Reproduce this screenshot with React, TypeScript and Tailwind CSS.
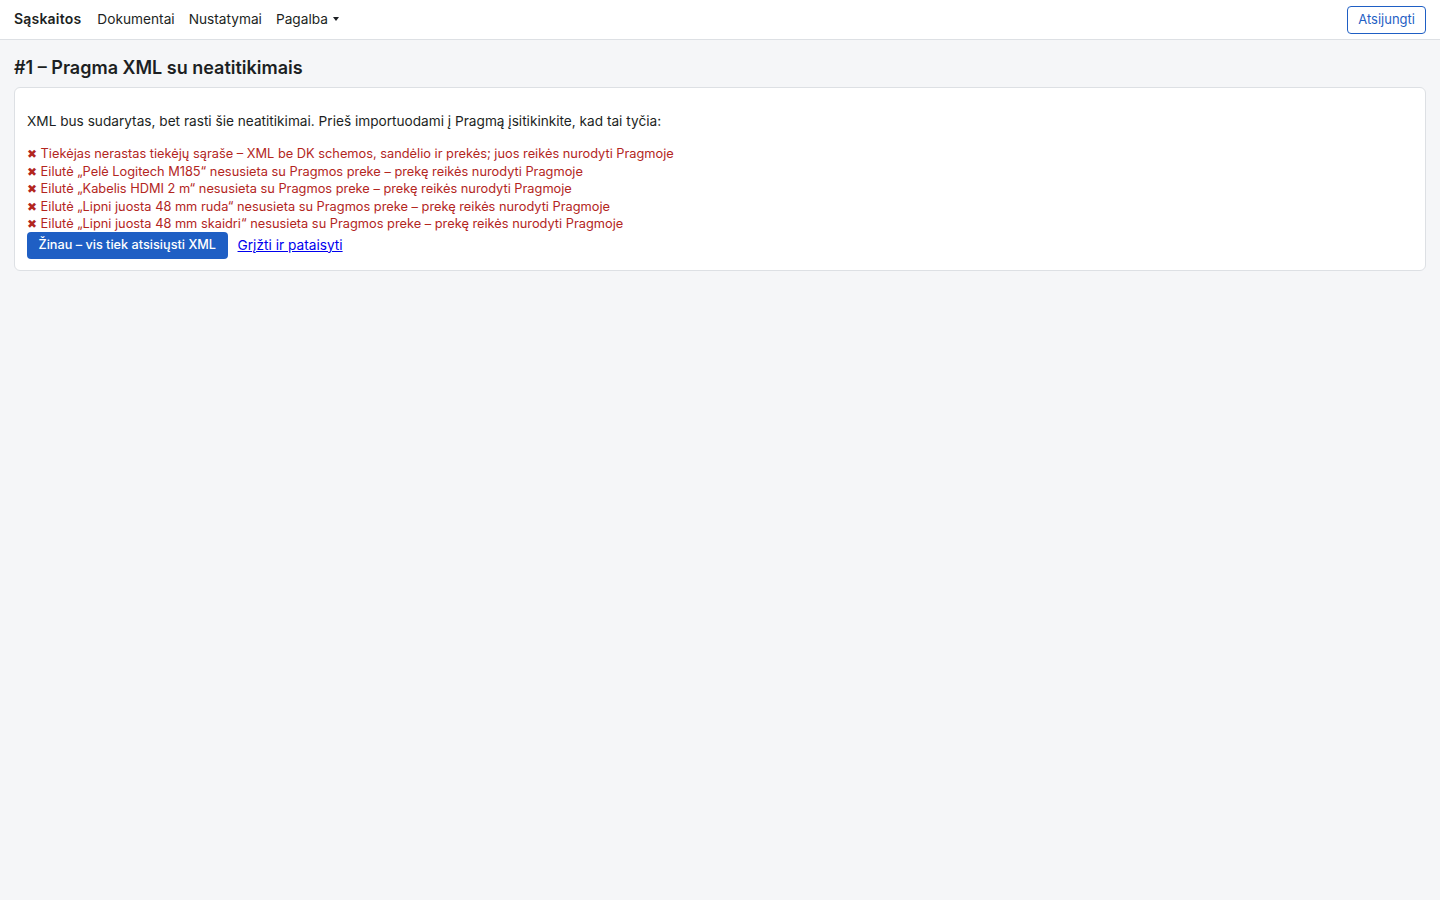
const issues = [
  "Tiekėjas nerastas tiekėjų sąraše – XML be DK schemos, sandėlio ir prekės; juos reikės nurodyti Pragmoje",
  "Eilutė „Pelė Logitech M185“ nesusieta su Pragmos preke – prekę reikės nurodyti Pragmoje",
  "Eilutė „Kabelis HDMI 2 m“ nesusieta su Pragmos preke – prekę reikės nurodyti Pragmoje",
  "Eilutė „Lipni juosta 48 mm ruda“ nesusieta su Pragmos preke – prekę reikės nurodyti Pragmoje",
  "Eilutė „Lipni juosta 48 mm skaidri“ nesusieta su Pragmos preke – prekę reikės nurodyti Pragmoje",
];

export default function App() {
  return (
    <div className="min-h-[900px] bg-[#f5f6f8] text-[#1c1f23] font-['Inter','Noto_Sans',sans-serif]">
      {/* Top nav */}
      <nav className="flex h-10 items-center justify-between border-b border-[#dde0e4] bg-white px-[14px]">
        <div className="flex items-center gap-[14px] text-[13.7px]">
          <span className="mr-[2px] text-sm font-semibold tracking-[0.2px] text-[#1c1f23]">Sąskaitos</span>
          <span>Dokumentai</span>
          <span>Nustatymai</span>
          <span className="flex items-center gap-[5px]">
            Pagalba
            <svg width="6" height="4" viewBox="0 0 6 4">
              <path d="M0 0h6L3 4z" fill="#1c1f23" />
            </svg>
          </span>
        </div>
        <button className="h-[28px] rounded-[4px] border border-[#1f5fc4] bg-white px-[10px] text-[13px] text-[#1f5fc4]">
          Atsijungti
        </button>
      </nav>

      <main className="px-[14px] pt-[16px]">
        <h1 className="mb-[7px] text-lg font-semibold leading-[24px]">#1 – Pragma XML su neatitikimais</h1>

        <div className="rounded-[6px] border border-[#dde0e4] bg-white px-[12px] pb-[11px] pt-[23px]">
          <p className="mb-[14px] text-[13.65px] leading-[20px]">
            XML bus sudarytas, bet rasti šie neatitikimai. Prieš importuodami į Pragmą įsitikinkite, kad tai tyčia:
          </p>
          <ul className="text-[12.8px] leading-[17.5px] text-[#b3261e]">
            {issues.map((t) => (
              <li key={t}>
                <span className="text-[12px]">✖</span> {t}
              </li>
            ))}
          </ul>
          <div className="-mt-[1px] flex items-center gap-[10px]">
            <button className="h-[27px] rounded-[4px] bg-[#1f5fc4] px-[11.5px] text-[12.7px] font-medium text-white">
              Žinau – vis tiek atsisiųsti XML
            </button>
            <a href="#" className="text-[13.7px] text-[#0000ee] underline">
              Grįžti ir pataisyti
            </a>
          </div>
        </div>
      </main>
    </div>
  );
}
